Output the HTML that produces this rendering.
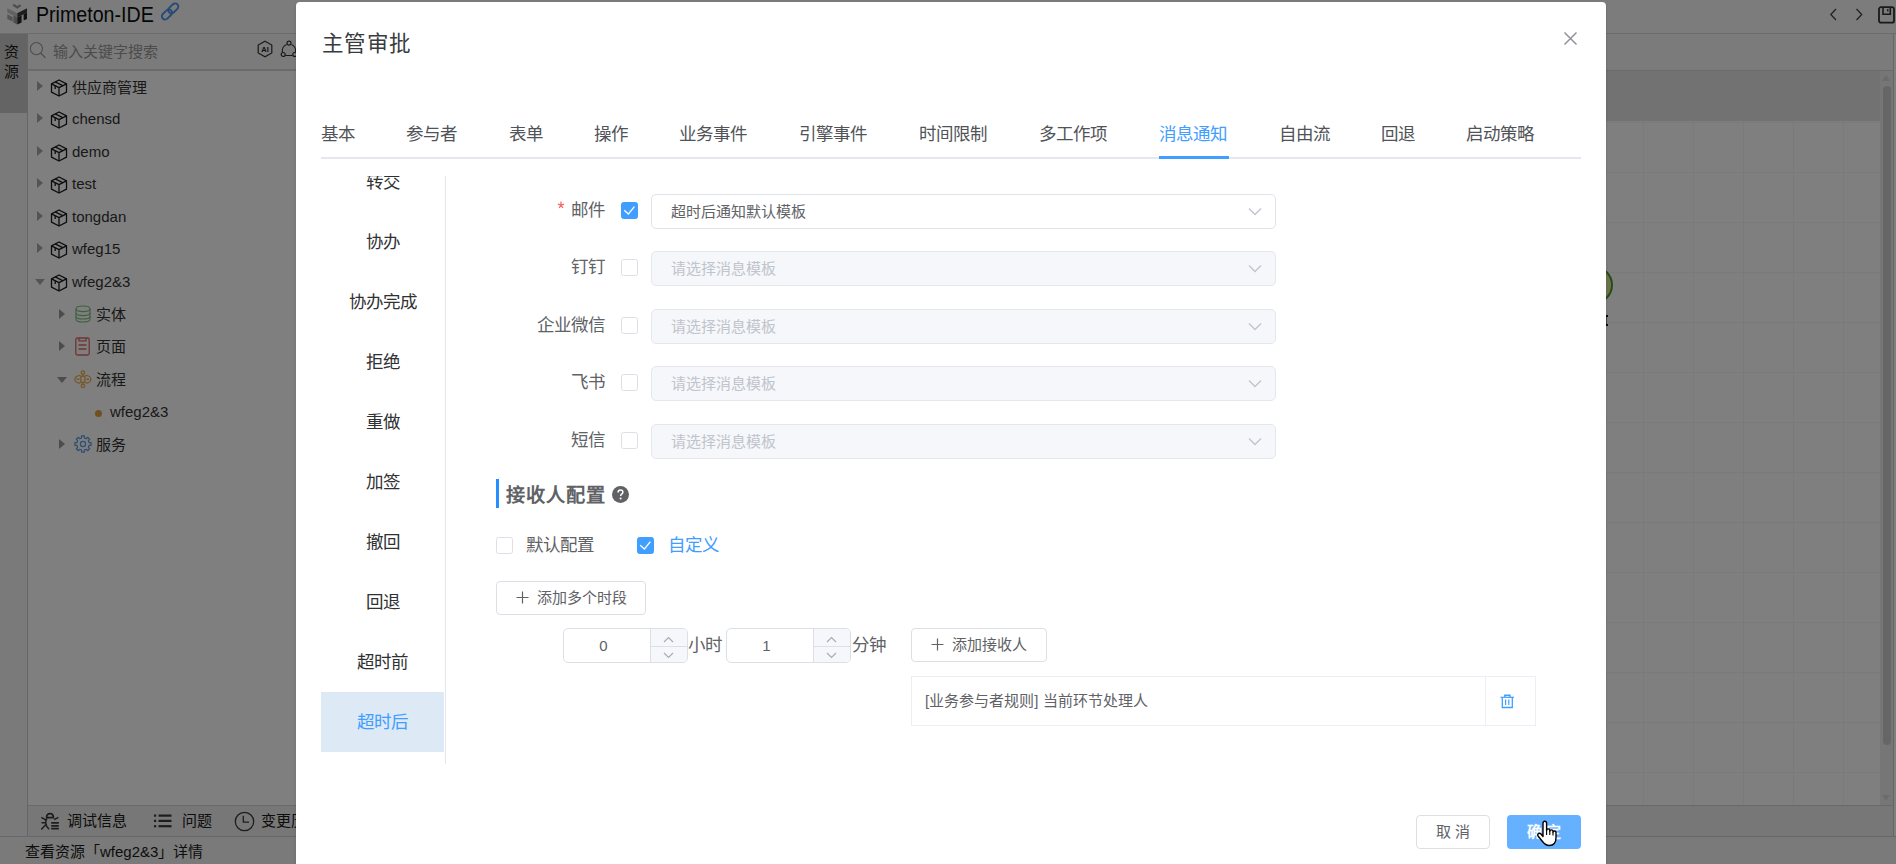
<!DOCTYPE html>
<html lang="zh-CN">
<head>
<meta charset="utf-8">
<style>
*{box-sizing:border-box;margin:0;padding:0}
html,body{width:1896px;height:864px;overflow:hidden;background:#fff;font-family:"Liberation Sans",sans-serif;color:#303133}
.a{position:absolute}
/* IDE */
#ide{position:absolute;left:0;top:0;width:1896px;height:864px;background:#fff}
.tr{position:absolute;font-size:15px;color:#333;line-height:20px;white-space:nowrap}
.arr{position:absolute;width:0;height:0;border-top:5px solid transparent;border-bottom:5px solid transparent;border-left:6px solid #999}
.arrd{position:absolute;width:0;height:0;border-left:5px solid transparent;border-right:5px solid transparent;border-top:6px solid #999}
#mask{position:absolute;left:0;top:0;width:1896px;height:864px;background:rgba(0,0,0,.5)}
/* dialog */
#dlg{position:absolute;left:296px;top:2px;width:1310px;height:900px;background:#fff;border-radius:4px;box-shadow:0 1px 3px rgba(0,0,0,.15)}
.t{position:absolute;white-space:nowrap}
.tab{position:absolute;top:123.2px;font-size:17.5px;line-height:22px;color:#505358}
.mi{position:absolute;left:321px;width:123px;height:60px;line-height:60px;text-align:center;font-size:17.5px;color:#303133}
.lbl{position:absolute;right:1291px;font-size:17.5px;line-height:22px;color:#606266;text-align:right}
.cb{position:absolute;width:17px;height:17px;border:1px solid #dcdfe6;border-radius:2.5px;background:#fff}
.cb.on{background:#409eff;border-color:#409eff}
.sel{position:absolute;left:651px;width:625px;height:35px;border:1px solid #e0e3e9;border-radius:5px;background:#fff}
.sel.dis{background:#f5f7fa;border-color:#e4e7ed}
.sel span{position:absolute;left:19px;top:0;line-height:33px;font-size:15px;color:#606266}
.sel.dis span{color:#c0c4cc}
.sel svg{position:absolute;left:596px;top:12px}
</style>
</head>
<body>
<div id="ide">
  <!-- header -->
  <div class="a" style="left:0;top:0;width:1896px;height:34px;background:#f8f8f8;border-bottom:1px solid #d8d8d8"></div>
  <svg class="a" style="left:4px;top:2px" width="28" height="26" viewBox="0 0 28 26">
    <path d="M9.2 2.8L13.3 5.4L16.6 3.2" stroke="#9a9a9a" stroke-width="2.2" fill="none"/>
    <path d="M3.3 6.2L13.3 11.2V15.4L3.3 10.4Z" fill="#c4c4c4"/>
    <path d="M3.3 12.3L8.6 15V19.6L3.3 17Z" fill="#a8a8a8"/>
    <path d="M9.4 13.4L13.3 15.4V22.6L9.4 20.6Z" fill="#9c9c9c"/>
    <path d="M13.3 11.2L23 6.2V10.4L13.3 15.4Z" fill="#3a3a3a"/>
    <path d="M13.3 15.4L17.6 13.2V20.4L13.3 22.6Z" fill="#2a2a2a"/>
    <path d="M19.6 12.2L23 10.5V16.9L19.6 18.6Z" fill="#222"/>
  </svg>
  <div class="t" style="left:36px;top:1px;font-size:21.8px;line-height:28px;color:#0c0c0c;transform:scaleX(.9);transform-origin:0 0">Primeton-IDE</div>
  <svg class="a" style="left:160px;top:2px" width="20" height="19" viewBox="0 0 20 19">
    <g transform="translate(10.1 9.4) rotate(-44)" fill="none" stroke="#4d97ee" stroke-width="1.9">
      <rect x="-10.2" y="-3.2" width="11.6" height="6.4" rx="3.2"/>
      <rect x="-1.4" y="-3.2" width="11.6" height="6.4" rx="3.2"/>
    </g>
  </svg>
  <svg class="a" style="left:1829px;top:8px" width="9" height="13" viewBox="0 0 9 13"><path d="M7 1L1.8 6.5L7 12" stroke="#444" stroke-width="1.3" fill="none"/></svg>
  <svg class="a" style="left:1855px;top:8px" width="9" height="13" viewBox="0 0 9 13"><path d="M1.5 1L6.7 6.5L1.5 12" stroke="#444" stroke-width="1.3" fill="none"/></svg>
  <svg class="a" style="left:1878px;top:6px" width="17" height="18" viewBox="0 0 17 18">
    <rect x="1" y="1.2" width="15" height="15.5" rx="2" fill="none" stroke="#333" stroke-width="1.8"/>
    <path d="M5 1.2V8.2H12.3V1.2" fill="none" stroke="#333" stroke-width="1.6"/>
    <path d="M9.8 3V5.5" stroke="#222" stroke-width="1.2"/>
  </svg>
  <!-- left strip -->
  <div class="a" style="left:0;top:34px;width:28px;height:802px;background:#f4f4f4;border-right:1px solid #cccccc"></div>
  <div class="a" style="left:0;top:34px;width:27px;height:78.5px;background:#c8c8c8"></div>
  <div class="t" style="left:4px;top:42px;width:16px;font-size:15px;line-height:20px;color:#1a1a1a;white-space:normal">资源</div>
  <!-- canvas (right) -->
  <div class="a" style="left:28px;top:71px;width:1865px;height:50px;background:#e4e4e4"></div>
  <div class="a" style="left:29px;top:121px;width:1851px;height:684px;background-color:#fff;background-image:linear-gradient(to right,#f5f5f5 1px,transparent 1px),linear-gradient(to bottom,#f5f5f5 1px,transparent 1px);background-size:50px 50px;background-position:1614px 1px"></div>
  <div class="a" style="left:1880px;top:70px;width:13px;height:735px;background:#ececec"></div>
  <div class="a" style="left:1883px;top:86px;width:8px;height:659px;border-radius:4px;background:#cdcdcd"></div>
  <div class="a" style="left:1882px;top:75px;width:0;height:0;border-left:4.5px solid transparent;border-right:4.5px solid transparent;border-bottom:6px solid #d8d8d8"></div>
  <div class="a" style="left:1882px;top:795px;width:0;height:0;border-left:4.5px solid transparent;border-right:4.5px solid transparent;border-top:6px solid #d8d8d8"></div>
  <div class="a" style="left:1893px;top:34px;width:1px;height:802px;background:#cfcfcf"></div>
  <div class="a" style="left:1574px;top:265.5px;width:38.6px;height:38.6px;border-radius:50%;border:2.6px solid #4a9a30;background:#dfe59a"></div>
  <div class="a" style="left:1606px;top:315px;width:1.8px;height:2px;background:#111"></div>
  <div class="a" style="left:1606px;top:324px;width:1.8px;height:2px;background:#111"></div>
  <div class="a" style="left:1606.3px;top:317px;width:1px;height:7px;background:#889"></div>
  <div class="a" style="left:28px;top:71px;width:420px;height:734px;background:#fff;border-right:1px solid #ddd"></div>
  <!-- search -->
  <div class="a" style="left:28px;top:34px;width:1865px;height:37px;background:#f6f6f6;border-bottom:1px solid #d4d4d4"></div>
  <div class="a" style="left:28px;top:34px;width:420px;height:36px;background:#f6f6f6;border-bottom:1px solid #d4d4d4"></div>
  <svg class="a" style="left:29px;top:41px" width="18" height="18" viewBox="0 0 18 18"><circle cx="7.4" cy="7.6" r="6.1" fill="none" stroke="#999" stroke-width="1.1"/><path d="M11.8 12L16.4 16.8" stroke="#999" stroke-width="1.2"/></svg>
  <div class="t" style="left:53px;top:42px;font-size:15px;line-height:20px;color:#999">输入关键字搜索</div>
  <svg class="a" style="left:256px;top:40px" width="18" height="18" viewBox="0 0 18 18">
    <path d="M9 1.2L15.8 5V13L9 16.8L2.2 13V5Z" fill="none" stroke="#333" stroke-width="1.2"/>
    <text x="9" y="12" font-size="7.5" text-anchor="middle" font-family="Liberation Sans" font-weight="bold" fill="#222">AI</text>
  </svg>
  <svg class="a" style="left:280px;top:40px" width="18" height="18" viewBox="0 0 18 18">
    <path d="M6.5 4.5A7 7 0 0 0 2.5 12.5M11.5 4.5A7 7 0 0 1 15.5 12.5M5.5 15.5H12.5" fill="none" stroke="#333" stroke-width="1.2"/>
    <circle cx="9" cy="3.2" r="2" fill="#f6f6f6" stroke="#333" stroke-width="1.2"/>
    <circle cx="3.2" cy="14.5" r="2" fill="#f6f6f6" stroke="#333" stroke-width="1.2"/>
    <circle cx="14.8" cy="14.5" r="2" fill="#f6f6f6" stroke="#333" stroke-width="1.2"/>
  </svg>
  <!-- tree -->
  <div class="arr" style="left:37px;top:81px;border-left-color:#a8a8a8"></div>
  <div class="arr" style="left:37px;top:113px;border-left-color:#a8a8a8"></div>
  <div class="arr" style="left:37px;top:146px;border-left-color:#a8a8a8"></div>
  <div class="arr" style="left:37px;top:178px;border-left-color:#a8a8a8"></div>
  <div class="arr" style="left:37px;top:211px;border-left-color:#a8a8a8"></div>
  <div class="arr" style="left:37px;top:243px;border-left-color:#a8a8a8"></div>
  <div class="arrd" style="left:35px;top:279px;border-top-color:#a8a8a8"></div>
  <svg class="cube a" style="left:50px;top:79px" width="18" height="18" viewBox="0 0 18 18"><use href="#cubeg"/></svg>
  <svg class="a" style="left:50px;top:111px" width="18" height="18" viewBox="0 0 18 18"><use href="#cubeg"/></svg>
  <svg class="a" style="left:50px;top:144px" width="18" height="18" viewBox="0 0 18 18"><use href="#cubeg"/></svg>
  <svg class="a" style="left:50px;top:176px" width="18" height="18" viewBox="0 0 18 18"><use href="#cubeg"/></svg>
  <svg class="a" style="left:50px;top:209px" width="18" height="18" viewBox="0 0 18 18"><use href="#cubeg"/></svg>
  <svg class="a" style="left:50px;top:241px" width="18" height="18" viewBox="0 0 18 18"><use href="#cubeg"/></svg>
  <svg class="a" style="left:50px;top:274px" width="18" height="18" viewBox="0 0 18 18"><use href="#cubeg"/></svg>
  <svg width="0" height="0" style="position:absolute"><defs><g id="cubeg" fill="none" stroke="#1a1a1a" stroke-width="1.3" stroke-linejoin="round">
    <path d="M9 1L16.5 4.8V13.2L9 17L1.5 13.2V4.8Z"/>
    <path d="M1.5 4.8L9 8.6L16.5 4.8M9 8.6V17"/>
    <path d="M5.2 2.9L12.7 6.7M5.2 6.7V10"/>
  </g></defs></svg>
  <div class="tr" style="left:72px;top:78px">供应商管理</div>
  <div class="tr" style="left:72px;top:109px">chensd</div>
  <div class="tr" style="left:72px;top:142px">demo</div>
  <div class="tr" style="left:72px;top:174px">test</div>
  <div class="tr" style="left:72px;top:207px">tongdan</div>
  <div class="tr" style="left:72px;top:239px">wfeg15</div>
  <div class="tr" style="left:72px;top:272px">wfeg2&amp;3</div>
  <div class="arr" style="left:59px;top:309px;border-left-color:#999"></div>
  <div class="arr" style="left:59px;top:341px;border-left-color:#999"></div>
  <div class="arrd" style="left:57px;top:377px;border-top-color:#999"></div>
  <div class="arr" style="left:59px;top:439px;border-left-color:#999"></div>
  <svg class="a" style="left:75px;top:305px" width="16" height="18" viewBox="0 0 16 18" fill="none" stroke="#7cc07c" stroke-width="1.15">
    <ellipse cx="8" cy="3.8" rx="7" ry="2.8"/>
    <path d="M1 3.8V14.2C1 15.8 4 17 8 17S15 15.8 15 14.2V3.8"/>
    <path d="M1 7.8C1 9.4 4 10.6 8 10.6S15 9.4 15 7.8M1 11.2C1 12.8 4 14 8 14S15 12.8 15 11.2"/>
  </svg>
  <svg class="a" style="left:75px;top:337px" width="15" height="19" viewBox="0 0 15 19" fill="none" stroke="#e06a6a" stroke-width="1.3">
    <rect x="0.8" y="1" width="13.4" height="17" rx="1.5"/>
    <path d="M4 1V3.8H11V1M3.5 8H11.5M3.5 12H11.5"/>
  </svg>
  <svg class="a" style="left:74px;top:370px" width="18" height="18" viewBox="0 0 18 18" fill="none" stroke="#eab04a" stroke-width="1.3">
    <circle cx="8.9" cy="2.5" r="1.7"/><circle cx="8.9" cy="15.9" r="1.7"/>
    <path d="M8.9 4.2V6.2M8.9 12.3V14.2"/>
    <rect x="6.9" y="6.2" width="4" height="6.1"/>
    <path d="M6.4 5.3C2.4 5.3 0.9 7.6 0.9 9.2S2.4 13.1 6.4 13.1"/>
    <path d="M11.4 5.3C15.4 5.3 16.9 7.6 16.9 9.2S15.4 13.1 11.4 13.1"/>
    <path d="M2.8 9.2H5.4M12.4 9.2H15" stroke-width="1.6"/>
  </svg>
  <div class="a" style="left:95px;top:410px;width:7px;height:7px;border-radius:50%;background:#e0a040"></div>
  <svg class="a" style="left:73.5px;top:435px" width="18" height="18" viewBox="0 0 18 18" fill="none" stroke="#5a9ae2" stroke-width="1.2" stroke-linejoin="round">
    <path d="M7.67 2.84 L7.56 0.93 L10.44 0.93 L10.33 2.84 L12.42 3.71 L13.69 2.27 L15.73 4.31 L14.29 5.58 L15.16 7.67 L17.07 7.56 L17.07 10.44 L15.16 10.33 L14.29 12.42 L15.73 13.69 L13.69 15.73 L12.42 14.29 L10.33 15.16 L10.44 17.07 L7.56 17.07 L7.67 15.16 L5.58 14.29 L4.31 15.73 L2.27 13.69 L3.71 12.42 L2.84 10.33 L0.93 10.44 L0.93 7.56 L2.84 7.67 L3.71 5.58 L2.27 4.31 L4.31 2.27 L5.58 3.71Z"/>
    <circle cx="9" cy="9" r="2.6"/>
  </svg>
  <div class="tr" style="left:96px;top:305px">实体</div>
  <div class="tr" style="left:96px;top:337px">页面</div>
  <div class="tr" style="left:96px;top:370px">流程</div>
  <div class="tr" style="left:110px;top:402px">wfeg2&amp;3</div>
  <div class="tr" style="left:96px;top:435px">服务</div>
  <!-- bottom panel -->
  <div class="a" style="left:28px;top:805px;width:1865px;height:31px;background:#eeeeee;border-top:1px solid #d2d2d2"></div>
  <svg class="a" style="left:40px;top:812px" width="20" height="19" viewBox="0 0 20 19" fill="none" stroke="#3a3a3a" stroke-width="1.5">
    <path d="M6.6 5.6C6.6 3 8.2 1.6 10 1.6S13.4 3 13.4 5.6Z" stroke-width="1.7"/>
    <path d="M1.4 5.4L5.6 7.8M18.4 5.4L14.2 7.6M7 6.5C5.6 8.5 5.6 11.5 6.6 13.2M1.3 17.4L5.6 12.8L9 17.2M1.5 10.8H5.6"/>
    <path d="M11.2 10.9H18.8M11.2 13.8H18.8M11.2 16.7H18.8" stroke-width="1.8"/>
  </svg>
  <div class="t" style="left:67px;top:811px;font-size:15px;line-height:20px;color:#1a1a1a">调试信息</div>
  <svg class="a" style="left:154px;top:814px" width="18" height="14" viewBox="0 0 18 14" fill="#3a3a3a">
    <rect x="0" y="0.5" width="2.2" height="2.2"/><rect x="4.5" y="0.5" width="13" height="2.2"/>
    <rect x="0" y="5.8" width="2.2" height="2.2"/><rect x="4.5" y="5.8" width="13" height="2.2"/>
    <rect x="0" y="11.1" width="2.2" height="2.2"/><rect x="4.5" y="11.1" width="13" height="2.2"/>
  </svg>
  <div class="t" style="left:182px;top:811px;font-size:15px;line-height:20px;color:#1a1a1a">问题</div>
  <svg class="a" style="left:234px;top:811px" width="21" height="21" viewBox="0 0 21 21" fill="none" stroke="#3a3a3a" stroke-width="1.3">
    <circle cx="10.5" cy="10.5" r="9.2"/><path d="M9.3 4.8V11.2H15"/>
  </svg>
  <div class="t" style="left:261px;top:811px;font-size:15px;line-height:20px;color:#1a1a1a">变更历史</div>
  <!-- status -->
  <div class="a" style="left:0;top:836px;width:1896px;height:28px;background:#f4f4f4;border-top:1px solid #cfcfcf"></div>
  <div class="t" style="left:25px;top:842px;font-size:15px;line-height:20px;color:#1a1a1a">查看资源「wfeg2&amp;3」详情</div>
</div>
<div id="mask"></div>
<div id="dlg"></div>
<div id="dc">
  <div class="t" style="left:321.5px;top:31px;font-size:21.5px;letter-spacing:0.6px;line-height:26px;color:#3a3b3e">主管审批</div>
  <svg class="a" style="left:1563px;top:31px" width="15" height="15" viewBox="0 0 15 15"><path d="M1.5 1.5L13.5 13.5M13.5 1.5L1.5 13.5" stroke="#909399" stroke-width="1.5" fill="none"/></svg>
  <!-- tabs -->
  <div class="a" style="left:321px;top:156.5px;width:1260px;height:2px;background:#e4e7ed"></div>
  <div class="tab" style="left:321px">基本</div>
  <div class="tab" style="left:406px">参与者</div>
  <div class="tab" style="left:508.5px">表单</div>
  <div class="tab" style="left:593.5px">操作</div>
  <div class="tab" style="left:678.5px">业务事件</div>
  <div class="tab" style="left:798.5px">引擎事件</div>
  <div class="tab" style="left:918.5px">时间限制</div>
  <div class="tab" style="left:1038.5px">多工作项</div>
  <div class="tab" style="left:1158.5px;color:#409eff">消息通知</div>
  <div class="tab" style="left:1278.5px">自由流</div>
  <div class="tab" style="left:1381px">回退</div>
  <div class="tab" style="left:1466px">启动策略</div>
  <div class="a" style="left:1158.5px;top:156px;width:70px;height:2.5px;background:#409eff"></div>
  <!-- left menu -->
  <div class="a" style="left:321px;top:176px;width:125px;height:588px;overflow:hidden;border-right:1px solid #e4e7ed">
    <div style="position:absolute;left:0;top:-24px;width:123px">
      <div class="mi" style="position:relative;left:0">转交</div>
      <div class="mi" style="position:relative;left:0">协办</div>
      <div class="mi" style="position:relative;left:0">协办完成</div>
      <div class="mi" style="position:relative;left:0">拒绝</div>
      <div class="mi" style="position:relative;left:0">重做</div>
      <div class="mi" style="position:relative;left:0">加签</div>
      <div class="mi" style="position:relative;left:0">撤回</div>
      <div class="mi" style="position:relative;left:0">回退</div>
      <div class="mi" style="position:relative;left:0">超时前</div>
      <div class="mi" style="position:relative;left:0;background:#dde9f5;color:#409eff">超时后</div>
    </div>
  </div>
  <!-- form rows -->
  <svg class="a" style="left:557px;top:201px" width="8" height="8" viewBox="0 0 8 8"><path d="M4 0.6V4.2M4 4.2L0.9 3.1M4 4.2L7.1 3.1M4 4.2L2.1 7M4 4.2L5.9 7" stroke="#f56c6c" stroke-width="1.3" fill="none"/></svg>
  <div class="lbl" style="top:199px">邮件</div>
  <div class="cb on" style="left:621px;top:201.5px"><svg width="17" height="17" viewBox="0 0 17 17" style="position:absolute;left:-1px;top:-1px"><path d="M3.2 8.2L7.4 12L13.4 4.6" stroke="#fff" stroke-width="1.3" fill="none"/></svg></div>
  <div class="sel" style="top:193.5px"><span style="color:#606266">超时后通知默认模板</span><svg width="14" height="9" viewBox="0 0 14 9"><path d="M1 1.5L7 7.5L13 1.5" stroke="#c0c4cc" stroke-width="1.3" fill="none"/></svg></div>

  <div class="lbl" style="top:256px">钉钉</div>
  <div class="cb" style="left:621px;top:259px"></div>
  <div class="sel dis" style="top:251px"><span>请选择消息模板</span><svg width="14" height="9" viewBox="0 0 14 9"><path d="M1 1.5L7 7.5L13 1.5" stroke="#c0c4cc" stroke-width="1.3" fill="none"/></svg></div>

  <div class="lbl" style="top:314px">企业微信</div>
  <div class="cb" style="left:621px;top:316.5px"></div>
  <div class="sel dis" style="top:308.5px"><span>请选择消息模板</span><svg width="14" height="9" viewBox="0 0 14 9"><path d="M1 1.5L7 7.5L13 1.5" stroke="#c0c4cc" stroke-width="1.3" fill="none"/></svg></div>

  <div class="lbl" style="top:371px">飞书</div>
  <div class="cb" style="left:621px;top:374px"></div>
  <div class="sel dis" style="top:366px"><span>请选择消息模板</span><svg width="14" height="9" viewBox="0 0 14 9"><path d="M1 1.5L7 7.5L13 1.5" stroke="#c0c4cc" stroke-width="1.3" fill="none"/></svg></div>

  <div class="lbl" style="top:429px">短信</div>
  <div class="cb" style="left:621px;top:431.5px"></div>
  <div class="sel dis" style="top:423.5px"><span>请选择消息模板</span><svg width="14" height="9" viewBox="0 0 14 9"><path d="M1 1.5L7 7.5L13 1.5" stroke="#c0c4cc" stroke-width="1.3" fill="none"/></svg></div>

  <!-- section -->
  <div class="a" style="left:496px;top:478.5px;width:3px;height:29px;background:#2490ff"></div>
  <div class="t" style="left:506px;top:483.5px;font-size:19.2px;letter-spacing:1px;line-height:24px;font-weight:bold;color:#606266">接收人配置</div>
  <svg class="a" style="left:612px;top:485.5px" width="17" height="17" viewBox="0 0 17 17"><circle cx="8.5" cy="8.5" r="8.5" fill="#606266"/><path d="M6.1 6.4C6.1 4.9 7.2 4 8.5 4S10.9 4.9 10.9 6.2C10.9 7.6 9.4 8 8.9 8.8C8.7 9.1 8.7 9.5 8.7 10.1" fill="none" stroke="#fff" stroke-width="1.5"/><circle cx="8.6" cy="12.6" r="1" fill="#fff"/></svg>

  <div class="cb" style="left:496px;top:537px"></div>
  <div class="t" style="left:526px;top:534px;font-size:17.5px;line-height:22px;font-weight:500;color:#606266">默认配置</div>
  <div class="cb on" style="left:637px;top:537px"><svg width="17" height="17" viewBox="0 0 17 17" style="position:absolute;left:-1px;top:-1px"><path d="M3.2 8.2L7.4 12L13.4 4.6" stroke="#fff" stroke-width="1.3" fill="none"/></svg></div>
  <div class="t" style="left:668px;top:534px;font-size:17.5px;line-height:22px;font-weight:500;color:#409eff">自定义</div>

  <div class="a" style="left:496px;top:581px;width:150px;height:34px;border:1px solid #dcdfe6;border-radius:4px"></div>
  <svg class="a" style="left:516px;top:591px" width="13" height="13" viewBox="0 0 13 13"><path d="M6.5 0.5V12.5M0.5 6.5H12.5" stroke="#606266" stroke-width="1.2"/></svg>
  <div class="t" style="left:537px;top:588px;font-size:15px;line-height:20px;font-weight:500;color:#606266">添加多个时段</div>

  <!-- number inputs -->
  <div class="a" style="left:563px;top:628px;width:125px;height:35px;border:1px solid #dcdfe6;border-radius:5px;overflow:hidden">
    <div class="a" style="left:0;top:0;width:79px;height:33px;line-height:33px;text-align:center;font-size:15px;color:#606266">0</div>
    <div class="a" style="left:86px;top:0;width:38px;height:33px;background:#f5f7fa;border-left:1px solid #dcdfe6"></div>
    <div class="a" style="left:87px;top:17px;width:37px;height:1px;background:#dcdfe6"></div>
    <svg class="a" style="left:99px;top:7px" width="11" height="7" viewBox="0 0 11 7"><path d="M1 6L5.5 1.5L10 6" stroke="#a8abb2" stroke-width="1.2" fill="none"/></svg>
    <svg class="a" style="left:99px;top:22.5px" width="11" height="7" viewBox="0 0 11 7"><path d="M1 1L5.5 5.5L10 1" stroke="#a8abb2" stroke-width="1.2" fill="none"/></svg>
  </div>
  <div class="t" style="left:688px;top:634px;font-size:17.5px;line-height:22px;color:#606266">小时</div>
  <div class="a" style="left:726px;top:628px;width:125px;height:35px;border:1px solid #dcdfe6;border-radius:5px;overflow:hidden">
    <div class="a" style="left:0;top:0;width:79px;height:33px;line-height:33px;text-align:center;font-size:15px;color:#606266">1</div>
    <div class="a" style="left:86px;top:0;width:38px;height:33px;background:#f5f7fa;border-left:1px solid #dcdfe6"></div>
    <div class="a" style="left:87px;top:17px;width:37px;height:1px;background:#dcdfe6"></div>
    <svg class="a" style="left:99px;top:7px" width="11" height="7" viewBox="0 0 11 7"><path d="M1 6L5.5 1.5L10 6" stroke="#a8abb2" stroke-width="1.2" fill="none"/></svg>
    <svg class="a" style="left:99px;top:22.5px" width="11" height="7" viewBox="0 0 11 7"><path d="M1 1L5.5 5.5L10 1" stroke="#a8abb2" stroke-width="1.2" fill="none"/></svg>
  </div>
  <div class="t" style="left:852px;top:634px;font-size:17.5px;line-height:22px;color:#606266">分钟</div>

  <div class="a" style="left:911px;top:628px;width:136px;height:34px;border:1px solid #dcdfe6;border-radius:4px"></div>
  <svg class="a" style="left:931px;top:638px" width="13" height="13" viewBox="0 0 13 13"><path d="M6.5 0.5V12.5M0.5 6.5H12.5" stroke="#606266" stroke-width="1.2"/></svg>
  <div class="t" style="left:952px;top:635px;font-size:15px;line-height:20px;font-weight:500;color:#606266">添加接收人</div>

  <div class="a" style="left:911px;top:676px;width:625px;height:50px;border:1px solid #ebeef5"></div>
  <div class="a" style="left:1485px;top:677px;width:1px;height:48px;background:#ebeef5"></div>
  <div class="t" style="left:925px;top:691px;font-size:15px;line-height:20px;color:#606266">[业务参与者规则] 当前环节处理人</div>
  <svg class="a" style="left:1500px;top:694px" width="15" height="15" viewBox="0 0 15 15" fill="none" stroke="#409eff">
    <path d="M0.5 3.3H14" stroke-width="1.2"/>
    <path d="M4.8 3V1.3H10V3" stroke-width="1.4"/>
    <path d="M2.3 3.3V13.5H12.3V3.3" stroke-width="1.3"/>
    <path d="M5.6 5.5V11M8.8 5.5V11" stroke-width="1.2"/>
  </svg>

  <!-- footer -->
  <div class="a" style="left:1416px;top:815px;width:74px;height:34px;border:1px solid #dcdfe6;border-radius:4px;background:#fff;text-align:center;line-height:32px;font-size:15px;font-weight:500;color:#606266">取 消</div>
  <div class="a" style="left:1507px;top:815px;width:74px;height:34px;border-radius:4px;background:#66b1ff;text-align:center;line-height:34px;font-size:15px;font-weight:600;color:#fff">确 定</div>
  <svg class="a" style="left:1536px;top:820px" width="22" height="27" viewBox="0 0 22 27">
    <path d="M7 16.5V3.2C7 2 7.8 1.3 8.8 1.3S10.6 2 10.6 3.2V10.5C10.6 9.5 11.3 8.9 12.2 8.9S13.8 9.5 13.8 10.5V11.5C13.8 10.5 14.5 9.9 15.4 9.9S17 10.5 17 11.5V12.5C17 11.6 17.7 11 18.5 11S20 11.6 20 12.5V17.5C20 22 17.8 25.5 13.3 25.5C10 25.5 8.4 24 6.5 21.5L2.2 16.2C1.5 15.3 1.6 14.2 2.4 13.6C3.2 13 4.3 13.2 5 14Z" fill="#fff" stroke="#000" stroke-width="1.4" stroke-linejoin="round"/>
    <path d="M10.6 10.5V15M13.8 11.5V15M17 12.5V15.5" stroke="#000" stroke-width="1.1"/>
  </svg>
</div>
</body>
</html>
